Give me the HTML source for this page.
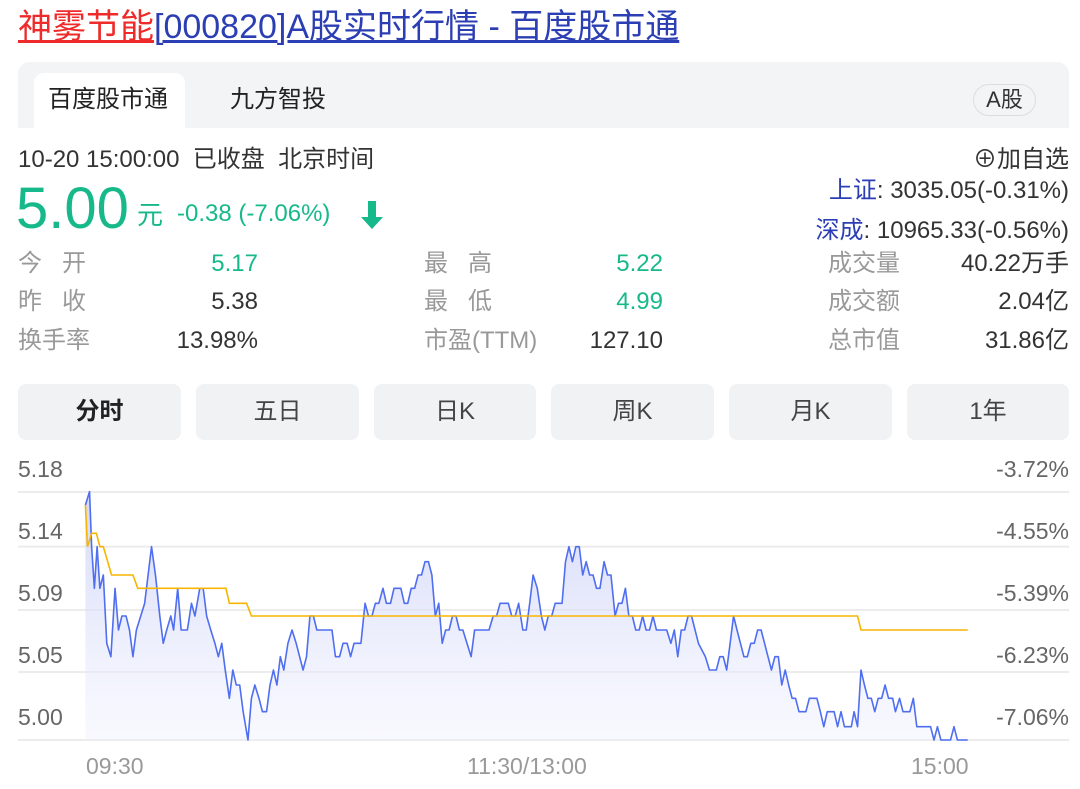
<!DOCTYPE html>
<html><head><meta charset="utf-8"><style>
*{margin:0;padding:0;box-sizing:border-box}
body{width:1080px;height:789px;background:#fff;font-family:"Liberation Sans","Noto Sans CJK SC",sans-serif;position:relative;overflow:hidden;color:#333}
.a{position:absolute;white-space:nowrap;line-height:1}
.t{font-size:34px;top:10px;left:18px}
.t .r{color:#ee2a2a;text-decoration:underline}
.t .b{color:#2b3eb3;text-decoration:underline}
.bar{position:absolute;left:18px;top:62px;width:1051px;height:66px;background:#f3f4f6;border-radius:12px 12px 0 0}
.tab{position:absolute;left:34px;top:73px;width:151px;height:55px;background:#fff;border-radius:10px 10px 0 0}
.f22{font-size:24px}
.g{color:#999}
.gr{color:#17b98a}
.btn{position:absolute;top:384px;height:56px;background:#f1f2f4;border-radius:8px;font-size:24px;color:#444;text-align:center;line-height:56px}
.yl{font-size:23px;color:#666}
</style></head><body>
<div class="a t"><span class="r">神雾节能</span><span class="b">[000820]A股实时行情 - 百度股市通</span></div>
<div class="bar"></div><div class="tab"></div>
<div class="a f22" style="left:48px;top:88px;color:#222">百度股市通</div>
<div class="a f22" style="left:230px;top:88px;color:#222">九方智投</div>
<div class="a" style="left:973px;top:84px;width:63px;height:32px;border:1.5px solid #ddd;border-radius:16px;font-size:22px;text-align:center;line-height:29px;color:#333">A股</div>
<div class="a f22" style="left:18px;top:148px">10-20 15:00:00&nbsp; 已收盘&nbsp; 北京时间</div>
<div class="a gr" style="left:16px;top:180px;font-size:58px">5.00</div>
<div class="a gr" style="left:137px;top:202px;font-size:26px">元</div>
<div class="a gr f22" style="left:177px;top:202px">-0.38 (-7.06%)</div>
<svg class="a" style="left:359px;top:199px" width="26" height="32" viewBox="0 0 26 32"><path d="M9 2h8v16h7L13 30 2 18h7z" fill="#17b98a"/></svg>
<div class="a f22" style="right:11px;top:148px">⊕加自选</div>
<div class="a f22" style="right:11px;top:179px"><span style="color:#2b3eb3">上证</span>: 3035.05(-0.31%)</div>
<div class="a f22" style="right:11px;top:219px"><span style="color:#2b3eb3">深成</span>: 10965.33(-0.56%)</div>

<div class="a f22 g" style="left:18px;top:252px">今&nbsp;&nbsp;&nbsp;开</div>
<div class="a f22 gr" style="right:822px;top:252px">5.17</div>
<div class="a f22 g" style="left:18px;top:290px">昨&nbsp;&nbsp;&nbsp;收</div>
<div class="a f22" style="right:822px;top:290px">5.38</div>
<div class="a f22 g" style="left:18px;top:329px">换手率</div>
<div class="a f22" style="right:822px;top:329px">13.98%</div>
<div class="a f22 g" style="left:424px;top:252px">最&nbsp;&nbsp;&nbsp;高</div>
<div class="a f22 gr" style="right:417px;top:252px">5.22</div>
<div class="a f22 g" style="left:424px;top:290px">最&nbsp;&nbsp;&nbsp;低</div>
<div class="a f22 gr" style="right:417px;top:290px">4.99</div>
<div class="a f22 g" style="left:424px;top:329px">市盈(TTM)</div>
<div class="a f22" style="right:417px;top:329px">127.10</div>
<div class="a f22 g" style="left:828px;top:252px">成交量</div>
<div class="a f22" style="right:11px;top:252px">40.22万手</div>
<div class="a f22 g" style="left:828px;top:290px">成交额</div>
<div class="a f22" style="right:11px;top:290px">2.04亿</div>
<div class="a f22 g" style="left:828px;top:329px">总市值</div>
<div class="a f22" style="right:11px;top:329px">31.86亿</div>

<div class="btn" style="left:18px;width:163px;font-weight:bold;color:#222">分时</div>
<div class="btn" style="left:196px;width:163px">五日</div>
<div class="btn" style="left:374px;width:162px">日K</div>
<div class="btn" style="left:551px;width:163px">周K</div>
<div class="btn" style="left:729px;width:163px">月K</div>
<div class="btn" style="left:907px;width:162px">1年</div>

<svg class="a" style="left:0;top:440px" width="1069" height="349" viewBox="0 0 1552 1047" preserveAspectRatio="none">
<defs><linearGradient id="gg" x1="0" y1="0" x2="0" y2="1"><stop offset="0" stop-color="#c9cff7" stop-opacity=".8"/><stop offset="1" stop-color="#eef0fd" stop-opacity=".4"/></linearGradient></defs>
<g stroke="#ececec" stroke-width="2">
<line x1="26" y1="156" x2="1552" y2="156" vector-effect="non-scaling-stroke"/><line x1="26" y1="320" x2="1552" y2="320" vector-effect="non-scaling-stroke"/><line x1="26" y1="510" x2="1552" y2="510" vector-effect="non-scaling-stroke"/><line x1="26" y1="696" x2="1552" y2="696" vector-effect="non-scaling-stroke"/><line x1="26" y1="900" x2="1552" y2="900" vector-effect="non-scaling-stroke"/></g>
<polyline fill="url(#gg)" stroke="none" points="124,900 124,195 130,155 133,320 137,445 141,320 145,445 150,405 155,610 161,650 167,445 172,570 177,528 183,528 188,570 193,650 198,570 210,490 220,320 226,410 232,528 237,610 242,570 248,528 252,570 258,445 263,570 272,570 278,490 283,528 290,445 295,445 300,528 306,570 312,610 317,650 322,610 327,690 333,775 338,690 343,735 348,735 353,815 360,900 365,775 370,735 376,775 381,815 387,815 392,735 397,690 402,735 407,650 412,690 418,610 424,570 430,610 435,650 440,690 445,650 450,528 455,528 460,570 482,570 487,650 493,650 498,610 504,610 509,650 514,610 524,610 530,490 535,528 540,528 545,490 550,490 556,445 561,490 567,490 572,445 582,445 587,490 592,490 597,445 602,445 607,405 612,405 617,365 622,365 627,405 632,528 637,490 642,610 647,570 652,570 657,528 662,528 667,570 672,570 678,610 684,650 689,570 710,570 716,528 721,528 726,490 738,490 743,528 748,528 753,490 759,570 764,570 769,490 774,405 780,445 786,528 791,570 796,528 801,528 806,490 816,490 821,365 826,320 831,365 836,320 841,320 846,405 851,365 856,405 861,405 866,445 871,445 877,365 882,405 887,405 893,528 898,490 903,490 908,445 913,528 918,528 923,570 928,570 933,528 938,570 943,570 948,528 953,570 968,570 974,610 979,570 984,650 989,570 994,570 999,528 1004,528 1014,610 1024,650 1030,690 1040,690 1045,650 1050,650 1055,690 1060,610 1065,528 1070,570 1075,610 1080,650 1085,650 1090,610 1095,610 1100,570 1105,570 1110,610 1115,650 1120,690 1125,650 1130,650 1135,735 1140,690 1145,735 1150,775 1155,775 1160,815 1170,815 1175,775 1186,775 1191,815 1196,860 1201,815 1211,815 1216,860 1221,815 1226,860 1236,860 1240,815 1245,860 1250,690 1255,735 1260,775 1265,775 1270,815 1275,775 1280,775 1285,735 1290,775 1296,775 1300,815 1306,775 1311,815 1321,815 1326,775 1331,860 1351,860 1356,900 1361,860 1366,900 1380,900 1385,860 1390,900 1405,900"/>
<polyline fill="none" stroke="#4f6ef0" stroke-width="1.6" vector-effect="non-scaling-stroke" stroke-linejoin="round" points="124,195 130,155 133,320 137,445 141,320 145,445 150,405 155,610 161,650 167,445 172,570 177,528 183,528 188,570 193,650 198,570 210,490 220,320 226,410 232,528 237,610 242,570 248,528 252,570 258,445 263,570 272,570 278,490 283,528 290,445 295,445 300,528 306,570 312,610 317,650 322,610 327,690 333,775 338,690 343,735 348,735 353,815 360,900 365,775 370,735 376,775 381,815 387,815 392,735 397,690 402,735 407,650 412,690 418,610 424,570 430,610 435,650 440,690 445,650 450,528 455,528 460,570 482,570 487,650 493,650 498,610 504,610 509,650 514,610 524,610 530,490 535,528 540,528 545,490 550,490 556,445 561,490 567,490 572,445 582,445 587,490 592,490 597,445 602,445 607,405 612,405 617,365 622,365 627,405 632,528 637,490 642,610 647,570 652,570 657,528 662,528 667,570 672,570 678,610 684,650 689,570 710,570 716,528 721,528 726,490 738,490 743,528 748,528 753,490 759,570 764,570 769,490 774,405 780,445 786,528 791,570 796,528 801,528 806,490 816,490 821,365 826,320 831,365 836,320 841,320 846,405 851,365 856,405 861,405 866,445 871,445 877,365 882,405 887,405 893,528 898,490 903,490 908,445 913,528 918,528 923,570 928,570 933,528 938,570 943,570 948,528 953,570 968,570 974,610 979,570 984,650 989,570 994,570 999,528 1004,528 1014,610 1024,650 1030,690 1040,690 1045,650 1050,650 1055,690 1060,610 1065,528 1070,570 1075,610 1080,650 1085,650 1090,610 1095,610 1100,570 1105,570 1110,610 1115,650 1120,690 1125,650 1130,650 1135,735 1140,690 1145,735 1150,775 1155,775 1160,815 1170,815 1175,775 1186,775 1191,815 1196,860 1201,815 1211,815 1216,860 1221,815 1226,860 1236,860 1240,815 1245,860 1250,690 1255,735 1260,775 1265,775 1270,815 1275,775 1280,775 1285,735 1290,775 1296,775 1300,815 1306,775 1311,815 1321,815 1326,775 1331,860 1351,860 1356,900 1361,860 1366,900 1380,900 1385,860 1390,900 1405,900"/>
<polyline fill="none" stroke="#f7b500" stroke-width="1.6" vector-effect="non-scaling-stroke" points="124,195 127,320 133,280 140,280 145,320 150,320 162,405 193,405 200,445 328,445 333,490 358,490 365,528 1245,528 1250,570 1405,570"/>
</svg>

<div class="a yl" style="left:18px;top:458px">5.18</div>
<div class="a yl" style="left:18px;top:520px">5.14</div>
<div class="a yl" style="left:18px;top:582px">5.09</div>
<div class="a yl" style="left:18px;top:644px">5.05</div>
<div class="a yl" style="left:18px;top:706px">5.00</div>
<div class="a yl" style="right:11px;top:458px">-3.72%</div>
<div class="a yl" style="right:11px;top:520px">-4.55%</div>
<div class="a yl" style="right:11px;top:582px">-5.39%</div>
<div class="a yl" style="right:11px;top:644px">-6.23%</div>
<div class="a yl" style="right:11px;top:706px">-7.06%</div>
<div class="a yl" style="left:86px;top:755px;color:#999">09:30</div>
<div class="a yl" style="left:467px;top:755px;color:#999">11:30/13:00</div>
<div class="a yl" style="left:911px;top:755px;color:#999">15:00</div>
</body></html>
